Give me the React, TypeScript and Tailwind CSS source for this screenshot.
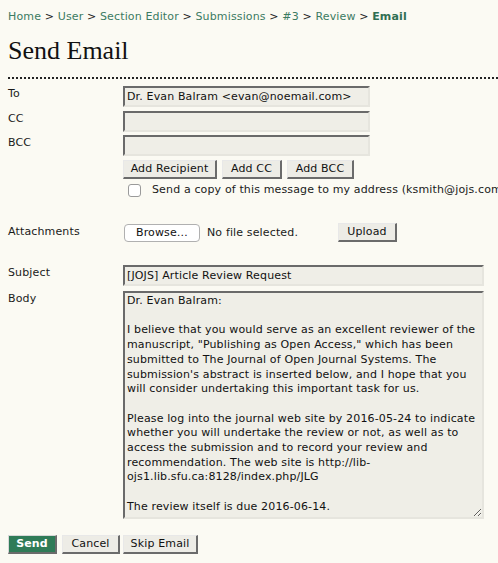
import React from "react";

const body = `Dr. Evan Balram:

I believe that you would serve as an excellent reviewer of the
manuscript, "Publishing as Open Access," which has been
submitted to The Journal of Open Journal Systems. The
submission's abstract is inserted below, and I hope that you
will consider undertaking this important task for us.

Please log into the journal web site by 2016-05-24 to indicate
whether you will undertake the review or not, as well as to
access the submission and to record your review and
recommendation. The web site is http://lib-
ojs1.lib.sfu.ca:8128/index.php/JLG

The review itself is due 2016-06-14.`;

const inputCls =
  "h-[21px] bg-[#efeee7] border-2 border-t-[#6a6a6a] border-l-[#6a6a6a] border-r-[#e6e5de] border-b-[#e6e5de] px-[2px] leading-[14px] text-[11px] text-[#111] outline-none";

const btnCls =
  "h-[19px] bg-[#edece6] border-t border-l border-t-[#e8e8e8] border-l-[#e8e8e8] border-r-2 border-b-2 border-r-[#6b6b6b] border-b-[#6b6b6b] text-[11px] leading-[14px] text-[#111] flex items-center justify-center";

function Sep() {
  return <span className="text-[#222]"> &gt; </span>;
}

export default function App() {
  return (
    <div className="min-h-[563px] w-full overflow-hidden bg-[#fbfaf3] font-['DejaVu_Sans',Verdana,sans-serif] text-[11px] tracking-[0.14px] text-[#1a1a1a]">
      <div className="pl-2 pt-[10px]">
        <nav className="text-[11px] leading-[14px] text-[#3b7b62] whitespace-pre">
          <span>Home</span>
          <Sep />
          <span>User</span>
          <Sep />
          <span>Section Editor</span>
          <Sep />
          <span>Submissions</span>
          <Sep />
          <span>#3</span>
          <Sep />
          <span>Review</span>
          <Sep />
          <span className="font-bold text-[#2f6f52]">Email</span>
        </nav>
        <h1 className="mt-[12px] font-['Liberation_Serif',serif] text-[26px] leading-[30px] font-normal tracking-normal text-[#111]">
          Send Email
        </h1>
        <div className="mt-[11px] border-b-2 border-dotted border-[#222]" />

        <div className="mt-[7px] grid grid-cols-[115px_1fr]">
          <div className="pt-[1px] leading-[14px]">To</div>
          <input
            readOnly
            className={`${inputCls} w-[247px]`}
            value="Dr. Evan Balram <evan@noemail.com>"
          />

          <div className="mt-[4px] pt-[1px] leading-[14px]">CC</div>
          <input readOnly className={`${inputCls} mt-[4px] w-[247px]`} value="" />

          <div className="mt-[3px] pt-[1px] leading-[14px]">BCC</div>
          <input readOnly className={`${inputCls} mt-[3px] w-[247px] h-[20px]`} value="" />

          <div />
          <div className="mt-[4px] flex">
            <button className={`${btnCls} w-[94px]`}>Add Recipient</button>
            <button className={`${btnCls} ml-[5px] w-[60px]`}>Add CC</button>
            <button className={`${btnCls} ml-[5px] w-[67px]`}>Add BCC</button>
          </div>

          <div />
          <div className="mt-[4px] flex items-center whitespace-nowrap">
            <span className="ml-[5px] h-[13px] w-[13px] rounded-[3px] border border-[#9a9a9a] bg-white" />
            <span className="ml-[11px] leading-[14px]">
              Send a copy of this message to my address (ksmith@jojs.com)
            </span>
          </div>

          <div className="mt-[27px] pt-[1px] leading-[14px]">Attachments</div>
          <div className="mt-[26px] flex items-start">
            <div className="flex w-[215px] items-center">
              <button className="mt-[1px] ml-[1px] h-[18px] w-[76px] rounded-[4px] border border-[#b0b0b0] bg-white text-[11px] leading-[14px] text-[#111]">
                Browse…
              </button>
              <span className="ml-[7px] mt-[1px] leading-[14px]">No file selected.</span>
            </div>
            <button className={`${btnCls} w-[59px]`}>Upload</button>
          </div>

          <div className="mt-[23px] pt-[1px] leading-[14px]">Subject</div>
          <input
            readOnly
            className={`${inputCls} mt-[23px] w-[361px]`}
            value="[JOJS] Article Review Request"
          />

          <div className="mt-[5px] pt-[1px] leading-[14px]">Body</div>
          <textarea
            readOnly
            value={body}
            className="mt-[5px] h-[228px] w-[361px] resize overflow-hidden bg-[#efeee7] border-2 border-t-[#6a6a6a] border-l-[#6a6a6a] border-r-[#e6e5de] border-b-[#e6e5de] px-[2px] pt-[1px] text-[11px] leading-[14.7px] text-[#111] outline-none whitespace-pre"
          />
        </div>

        <div className="mt-[16px] flex">
          <button className="h-[19px] w-[49px] bg-[#2f7b57] border-t border-l border-t-[#d8d8d8] border-l-[#d8d8d8] border-r-2 border-b-2 border-r-[#6b6b6b] border-b-[#6b6b6b] text-[11px] font-bold leading-[14px] text-white flex items-center justify-center">
            Send
          </button>
          <button className={`${btnCls} ml-[5px] w-[58px]`}>Cancel</button>
          <button className={`${btnCls} ml-[3px] w-[75px]`}>Skip Email</button>
        </div>
      </div>
    </div>
  );
}
